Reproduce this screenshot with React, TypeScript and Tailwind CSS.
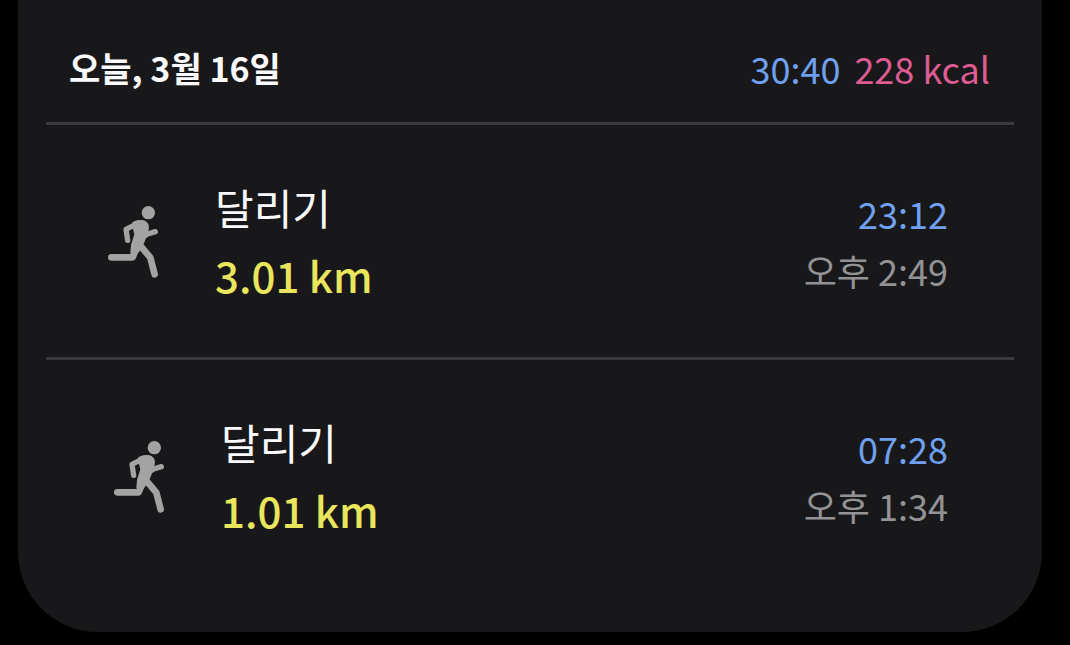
import { clsx } from "clsx";

const workouts = [
  { id: 1, name: "달리기", distance: "3.01 km", duration: "23:12", time: "오후 2:49", indented: false },
  { id: 2, name: "달리기", distance: "1.01 km", duration: "07:28", time: "오후 1:34", indented: true },
];

function RunnerIcon() {
  return (
    <svg
      viewBox="36 30 156 222"
      className="h-[74px] w-[52px] shrink-0 text-[#a3a3a3]"
      fill="none"
      stroke="currentColor"
      strokeLinecap="round"
      strokeLinejoin="round"
      aria-hidden="true"
    >
      <circle cx="160" cy="53" r="20" fill="currentColor" stroke="none" />
      <path
        d="M112 82C124 75 142 73 151 78C160 83 164 93 161 104L150 138L140 158L132 172L106 174L108 150L118 118L113 98Z"
        fill="currentColor"
        stroke="none"
      />
      <path d="M130 84L93 103L98 136" strokeWidth="16" />
      <path d="M140 128L158 117L181 110" strokeWidth="16" />
      <path d="M49 187H113L125 158" strokeWidth="20" />
      <path d="M136 152L166 188L179 238" strokeWidth="20" />
    </svg>
  );
}

export default function App() {
  return (
    <div className="min-h-screen bg-black pr-7 pb-[15px] pl-[18px] font-['Noto_Sans_CJK_KR',sans-serif]">
      <main className="rounded-b-[80px] bg-[#18181a] px-7 pb-10">
        <header className="flex items-center justify-between border-b-3 border-[#3a3a3c] pt-[46px] pr-6 pb-8 pl-[23px] leading-[44px]">
          <h1 className="text-[34px] font-bold text-[#fafafc]">오늘, 3월 16일</h1>
          <p className="flex gap-3.5 text-[36px]">
            <span className="text-[#6fa1f0]">30:40</span>
            <span className="text-[#de5b93]">228 kcal</span>
          </p>
        </header>

        <ul className="divide-y-3 divide-[#3a3a3c]">
          {workouts.map((workout) => (
            <li
              key={workout.id}
              className={clsx(
                "flex items-center pt-[49px] pr-[66px] pb-[47px]",
                workout.indented ? "pl-[67px]" : "pl-[61px]"
              )}
            >
              <RunnerIcon />
              <div className="ml-14 flex-1">
                <h2 className="text-[42px] leading-[66px] text-[#fafafc]">{workout.name}</h2>
                <p className="text-[42px] leading-[70px] font-medium text-[#e9e55c]">
                  {workout.distance}
                </p>
              </div>
              <div className="text-right text-[36px] leading-[57px]">
                <p className="text-[#6fa1f0]">{workout.duration}</p>
                <p className="text-[#939395]">{workout.time}</p>
              </div>
            </li>
          ))}
        </ul>
      </main>
    </div>
  );
}
